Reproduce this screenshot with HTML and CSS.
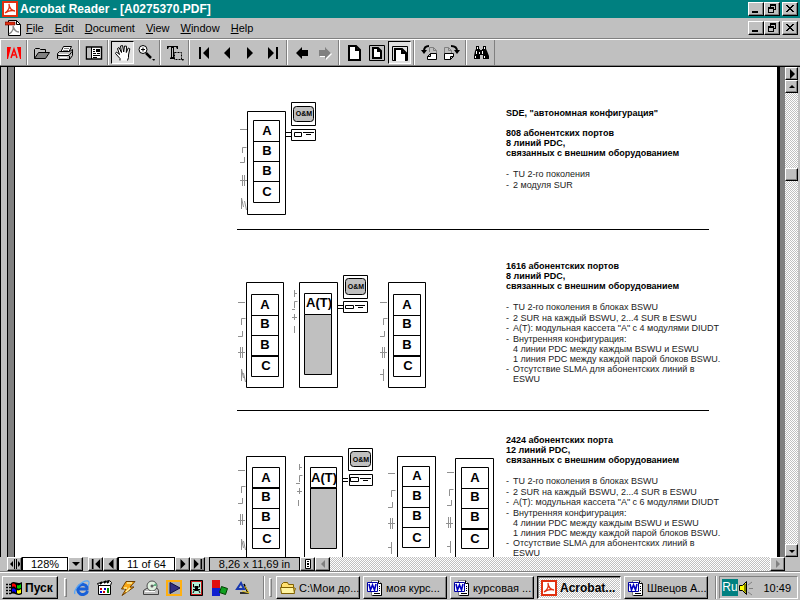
FILE: index.html
```html
<!DOCTYPE html>
<html lang="ru">
  <head>
    <meta charset="UTF-8" />
    <meta name="viewport" content="width=device-width, initial-scale=1.0" />
    <title>Acrobat Reader - [A0275370.PDF]</title>
    <link rel="stylesheet" href="styles.css" />
  </head>
  <body>
    <!-- shared icons -->
    <svg class="sprite" aria-hidden="true">
      <symbol id="i-acrobat" viewBox="0 0 16 16">
        <path fill="#e03010" d="M0 0h16v16H0z" />
        <path fill="#fff" d="M2 2h12v12H2z" />
        <path fill="none" stroke="#e03010" stroke-width="1.3" d="M3 12c3-2 5-5 4-9c0 4 3 7 6 7c-3-1-7 0-10 2" />
      </symbol>
      <symbol id="i-min" viewBox="0 0 12 10"><path d="M2 7h6v2H2z" /></symbol>
      <symbol id="i-restore" viewBox="0 0 12 10">
        <path d="M4 0h6v6H8V5h1V2H5v1H4zM2 3h6v6H2zm1 2v3h4V5z" fill-rule="evenodd" />
      </symbol>
      <symbol id="i-close" viewBox="0 0 12 10">
        <path d="M2 1h2v1h1v1h2V2h1V1h2v1H9v1H8v1H7v1h1v1h1v1h1v1H8V7H7V6H5v1H4v1H2V7h1V6h1V5h1V4H4V3H3V2H2z" />
      </symbol>
      <symbol id="i-first" viewBox="0 0 12 12"><path d="M1 0h2v12H1zM11 0v12L5 6z" /></symbol>
      <symbol id="i-prev" viewBox="0 0 12 12"><path d="M9 0v12L3 6z" /></symbol>
      <symbol id="i-next" viewBox="0 0 12 12"><path d="M3 0v12l6-6z" /></symbol>
      <symbol id="i-last" viewBox="0 0 12 12"><path d="M9 0h2v12H9zM1 0v12l6-6z" /></symbol>
      <symbol id="i-word" viewBox="0 0 16 16">
        <path fill="#fff" stroke="#808080" d="M4.500.5h7l3 3v12h-10z" />
        <path stroke="#000" fill="none" d="M11.500.5v3h3v12h-9M12 6.500h1M12 8.500h1M12 10.500h1M7 13.500h6" />
        <path fill="#fff" stroke="#0000a0" d="M.5 2.500h10v9H.5z" />
        <path fill="none" stroke="#0000c0" stroke-width="1.600" d="M2 4l1.500 6L5.500 5l2 5L9 4" />
      </symbol>
    </svg>

    <header class="titlebar">
      <svg class="icon16"><use href="#i-acrobat" /></svg>
      <h1>Acrobat Reader - [A0275370.PDF]</h1>
      <div class="winButtons">
        <button aria-label="Minimize"><svg><use href="#i-min" /></svg></button>
        <button aria-label="Restore"><svg><use href="#i-restore" /></svg></button>
        <button aria-label="Close"><svg><use href="#i-close" /></svg></button>
      </div>
    </header>

    <nav class="menubar">
      <svg class="icon16" viewBox="0 0 16 16">
        <path fill="#fff" stroke="#000" d="M3.500.5h8l4 4v11h-12z" />
        <path fill="none" stroke="#000" d="M11.500.5v4h4" />
        <path fill="#e03010" stroke="#600" stroke-width=".6" d="M0 2h10v3H0z" />
        <path fill="none" stroke="#888" stroke-width="1.400" d="M4 14c3-2 5-5 4-8c1 4 3 6 6 6" />
      </svg>
      <a href="#"><u>F</u>ile</a>
      <a href="#"><u>E</u>dit</a>
      <a href="#"><u>D</u>ocument</a>
      <a href="#"><u>V</u>iew</a>
      <a href="#"><u>W</u>indow</a>
      <a href="#"><u>H</u>elp</a>
      <div class="winButtons">
        <button aria-label="Minimize document"><svg><use href="#i-min" /></svg></button>
        <button aria-label="Restore document"><svg><use href="#i-restore" /></svg></button>
        <button aria-label="Close document"><svg><use href="#i-close" /></svg></button>
      </div>
    </nav>

    <div class="toolbar">
      <div class="group">
        <button aria-label="Adobe">
          <svg viewBox="0 0 18 18">
            <path fill="#f00" d="M2 3h4L3 15H2zM12 3h4v12h-1z" />
            <path fill="none" stroke="#f00" stroke-width="1.500" d="M6 14L9 5l3 9M7 11h3" />
          </svg>
        </button>
      </div>
      <div class="group">
        <button aria-label="Open">
          <svg viewBox="0 0 18 18">
            <path fill="#c0c0c0" stroke="#000" d="M1.500 14.500v-9l1-1h4l1 1h5v3" />
            <path fill="#808080" stroke="#000" d="M1.500 14.500l4-6h11l-4 6z" />
          </svg>
        </button>
        <button aria-label="Print">
          <svg viewBox="0 0 18 18">
            <path fill="#fff" stroke="#000" d="M4.500 8.500l3-6h8l-3 6z" />
            <path stroke="#808080" d="M8 4.500h5M7 6.500h5" />
            <path fill="#c0c0c0" stroke="#000" d="M1.500 9.500l2-2h10l3-2v6l-3 4h-11l-1-1z" />
            <path fill="none" stroke="#000" d="M2 11.500h11l3-4M13.500 12v3" />
            <path stroke="#fff" d="M3 10.500h9M4 13.500h7" />
          </svg>
        </button>
      </div>
      <div class="group">
        <button aria-label="Navigation pane">
          <svg viewBox="0 0 18 18">
            <path fill="#fff" stroke="#000" stroke-width="1.500" d="M1.500 3h15v12h-15z" />
            <path fill="#c0c0c0" d="M2 4h4v10H2z" />
            <path stroke="#000" d="M6.500 3v12M8 5.500h2M8 7.500h2M11 5.500h4M11 6.500h4M11 7.500h4M8 9.500h3M12 9.500h3M8 11.500h7M8 13.500h4" />
          </svg>
        </button>
      </div>
      <div class="group">
        <button class="pressed" aria-label="Hand tool" aria-pressed="true">
          <svg viewBox="0 0 18 18">
            <path fill="#fff" stroke="#000" d="M6 16.500v-2L1.500 9.500l1-1.500 3 2.500L3.500 4.500 5 3.500l2.500 5-1-6.500 2-.5 1.200 6.500.8-6 2 .2-.2 6.300 2-4.500 1.500.8L14.500 11v2.500l-1 3" />
          </svg>
        </button>
        <button aria-label="Zoom in">
          <svg viewBox="0 0 18 18">
            <circle cx="6" cy="5.500" r="4" fill="#fff" stroke="#000" />
            <path stroke="#000" d="M4 5.500h4M6 3.500v4" />
            <path stroke="#000" stroke-width="2.500" d="M9 9l5 5" />
            <path d="M15 15h3l-1 2z" />
          </svg>
        </button>
      </div>
      <div class="group">
        <button aria-label="Select text">
          <svg viewBox="0 0 18 18">
            <path d="M1 2h11v3h-1l-1-2H8v10l1 1v1H4v-1l1-1V3H3L2 5H1z" />
            <path fill="#c0c0c0" d="M6 4h1v9H6z" />
            <path fill="none" stroke="#000" stroke-dasharray="2 1" d="M8.500 8.500h7v7h-7z" />
            <path d="M15 15h3l-1 2z" />
          </svg>
        </button>
      </div>
      <div class="group">
        <button aria-label="First page"><svg class="nav"><use href="#i-first" /></svg></button>
        <button aria-label="Previous page"><svg class="nav"><use href="#i-prev" /></svg></button>
        <button aria-label="Next page"><svg class="nav"><use href="#i-next" /></svg></button>
        <button aria-label="Last page"><svg class="nav"><use href="#i-last" /></svg></button>
      </div>
      <div class="group">
        <button aria-label="Go back"><svg viewBox="0 0 18 18"><path d="M3 9l6-6v3h6v6H9v3z" /></svg></button>
        <button aria-label="Go forward">
          <svg viewBox="0 0 18 18">
            <path fill="#fff" d="M16 10l-6-6v3H4v6h6v3z" />
            <path fill="#808080" d="M15 9L9 3v3H3v6h6v3z" />
          </svg>
        </button>
      </div>
      <div class="group">
        <button aria-label="Actual size">
          <svg viewBox="0 0 18 18"><path fill="#fff" stroke="#000" stroke-width="2" d="M4 2h7l4 4v10H4zM11 2v4h4" /></svg>
        </button>
        <button aria-label="Fit in window">
          <svg viewBox="0 0 18 18">
            <path fill="none" stroke="#000" d="M1.500 1.500h15v15h-15z" />
            <path fill="#fff" stroke="#000" stroke-width="2" d="M5 4h5l3 3v7H5zM10 4v3h3" />
          </svg>
        </button>
        <button class="pressed" aria-label="Fit width" aria-pressed="true">
          <svg viewBox="0 0 18 18">
            <path fill="none" stroke="#000" d="M1.500 16.500v-14h15v14z" />
            <path fill="#fff" stroke="#000" stroke-width="2" d="M4 17V5h7l4 4v8M11 5v4h4" />
          </svg>
        </button>
      </div>
      <div class="group">
        <button aria-label="Rotate left">
          <svg viewBox="0 0 18 18">
            <path fill="none" stroke="#808080" d="M9.500 8V3.500h4l3 3V9M13.500 3.500v3h3" />
            <path fill="#fff" stroke="#000" d="M7.500 12.500l3-3h6v6h-9zM7.500 12.500h3v-3" />
            <path fill="none" stroke="#000" stroke-width="2" d="M9 2C6 2 4 3 4 7" />
            <path d="M1 6h6l-3 4z" />
          </svg>
        </button>
        <button aria-label="Rotate right">
          <svg viewBox="0 0 18 18">
            <path fill="none" stroke="#808080" d="M1.500 9V3.500h4l3 3V9M5.500 3.500v3h3" />
            <path fill="#fff" stroke="#000" d="M1.500 9.500h9v3l-3 3h-6zM10.500 12.500h-3v3" />
            <path fill="none" stroke="#000" stroke-width="2" d="M8 2c4 0 6 1 6 5" />
            <path d="M11 6h6l-3 4z" />
          </svg>
        </button>
      </div>
      <div class="group">
        <button aria-label="Find">
          <svg viewBox="0 0 18 18">
            <path d="M4 2h3v3h1v1h2V5h1V2h3v3l1 2 2 5v3h-6v-4H8v4H2v-3l1-5 1-2z" />
            <path stroke="#fff" d="M5.500 3v2M12.500 3v2M4.500 7v3M10.500 7v3M3.500 12v2M12.500 12v2M7.500 8v2" />
          </svg>
        </button>
      </div>
    </div>

    <main class="viewer">
      <div class="splitter"></div>
      <article class="page">
        <section>
          <svg class="diagram" viewBox="237 67 269 162" height="162">
            <g class="marks">
              <path d="M240 129.500h7M242.500 153v-5.500h4M240 162.500h4.500V157M240 180.500h7M242.500 175v11M244.500 175v11M241.500 209v-11l2 9M244.500 201l2 9" />
            </g>
            <g class="box">
              <path d="M247.500 111.500h38v103h-38zM253.500 120.500h26v82h-26zM253.500 141.500h26M253.500 161.500h26M253.500 181.500h26" />
              <path d="M291.500 102.500h24v23h-24zM291.500 129.500h24v11h-24zM294.500 132.500h7v4h-7zM303 132.500h11M306 134.500h5M286 132.500h5M286 136.500h5" />
              <rect class="screen" x="293.500" y="106.500" width="20" height="15" rx="3" />
            </g>
            <text x="267" y="135">A</text>
            <text x="267" y="155">B</text>
            <text x="267" y="175">B</text>
            <text x="267" y="196">C</text>
            <text class="om" x="304" y="116">O&amp;M</text>
          </svg>
          <div class="notes">
            <h2>SDE, "автономная конфигурация"</h2>
            <h3>808 абонентских портов<br />8 линий PDC,<br />связанных с внешним оборудованием</h3>
            <ul>
              <li><span>-</span><span>TU 2-го поколения</span></li>
              <li><span>-</span><span>2 модуля SUR</span></li>
            </ul>
          </div>
        </section>

        <section class="second">
          <svg class="diagram" viewBox="237 230 269 180" height="180">
            <g class="marks">
              <path d="M238 302.500h7M241.500 325v-6.500h4M238 336.500h4.500V331M238 352.500h7M240.500 347v11M242.500 347v11M241.500 381v-12l2 9M243.500 373l2 9" />
              <path d="M294.500 290v7M294 293.500h3M294.500 308v-6.500h3M292 309.500h3M292 317.500h5M294.500 314v6M294.500 326v7" />
              <path d="M380 302.500h7M383.500 325v-6.500h4M380 336.500h4.500V331M380 352.500h7M382.500 347v11M384.500 347v11M380 374.500h4M383.500 369v12" />
            </g>
            <g class="box">
              <path d="M246.500 282.500h37v105h-37zM251.500 294.500h27v82h-27zM251.500 315.500h27M251.500 335.500h27M251.500 355.500h27M251.500 356.500h27" />
              <path d="M299.500 282.500h38v105h-38zM304.500 293.500h27v21h-27z" />
              <path class="fill" d="M304.500 314.500h27v60h-27z" />
              <path d="M388.500 282.500h37v105h-37zM393.500 294.500h27v82h-27zM393.500 315.500h27M393.500 335.500h27M393.500 355.500h27M393.500 356.500h27" />
              <path d="M343.500 275.500h24v23h-24zM343.500 301.500h24v11h-24zM345.500 305.500h8v3h-8zM355 305.500h10M358 307.500h5M338 305.500h5M338 308.500h5" />
              <rect class="screen" x="345.500" y="278.500" width="20" height="16" rx="3" />
            </g>
            <text x="265" y="309">A</text>
            <text x="265" y="328">B</text>
            <text x="265" y="349">B</text>
            <text x="266" y="370">C</text>
            <text x="319" y="307">A(T)</text>
            <text x="407" y="309">A</text>
            <text x="407" y="328">B</text>
            <text x="407" y="349">B</text>
            <text x="408" y="370">C</text>
            <text class="om" x="356" y="289">O&amp;M</text>
          </svg>
          <div class="notes">
            <h3>1616 абонентских портов<br />8 линий PDC,<br />связанных с внешним оборудованием</h3>
            <ul>
              <li><span>-</span><span>TU 2-го поколения в блоках BSWU</span></li>
              <li><span>-</span><span>2 SUR на каждый BSWU, 2...4 SUR в ESWU</span></li>
              <li><span>-</span><span>A(T): модульная кассета "A" с 4 модулями DIUDT</span></li>
              <li><span>-</span><span>Внутренняя конфигурация:<br />4 линии PDC между каждым BSWU и ESWU<br />1 линия PDC между каждой парой блоков BSWU.</span></li>
              <li><span>-</span><span>Отсутствие SLMA для абонентских линий в<br />ESWU</span></li>
            </ul>
          </div>
        </section>

        <section class="third">
          <svg class="diagram" viewBox="237 411 269 180" height="180">
            <g class="marks">
              <path d="M238 470.500h7M241.500 493v-6.500h4M238 503.500h4.500V498M238 520.500h7M240.500 514v11M242.500 514v11M241.500 550v-11l2 9M243.500 541l2 9" />
              <path d="M299.500 464v6M299 467.500h3M299.500 482v-6.500h3M296 483.500h4M297 491.500h5M299.500 488v6M298.500 500v6" />
              <path d="M388 473.500h7M391.500 497v-6.500h4M388 507.500h4.500V502M388 523.500h7M390.500 518v11M392.500 518v11M388 547.500h4M391.500 542v12" />
              <path d="M447 472.500h7M449.500 496v-6.500h4M447 505.500h4.500V500M446 523.500h7M448.500 517v11M450.500 517v11M447 546.500h4M450.500 541v12" />
            </g>
            <g class="box">
              <path d="M246.500 456.500h39v110h-39zM252.500 467.500h27v81h-27zM252.500 487.500h27M252.500 488.500h27M252.500 508.500h27M252.500 528.500h27" />
              <path d="M304.500 456.500h38v110h-38zM310.500 467.500h26v20h-26z" />
              <path class="fill" d="M310.500 487.500h26v61h-26zM310.500 488.500h26" />
              <path d="M397.500 456.500h38v110h-38zM402.500 466.500h27v81h-27zM402.500 486.500h27M402.500 507.500h27M402.500 527.500h27" />
              <path d="M455.500 458.500h38v110h-38zM461.500 467.500h27v81h-27zM461.500 488.500h27M461.500 508.500h27M461.500 528.500h27M461.500 529.500h27" />
              <path d="M348.500 448.500h24v22h-24zM349.500 474.500h23v11h-23zM350.500 477.500h8v4h-8zM360 478.500h11M363 480.500h5M343 478.500h5M343 481.500h5" />
              <rect class="screen" x="350.500" y="451.500" width="20" height="15" rx="3" />
            </g>
            <text x="266" y="482">A</text>
            <text x="266" y="501">B</text>
            <text x="266" y="521">B</text>
            <text x="267" y="543">C</text>
            <text x="324" y="482">A(T)</text>
            <text x="417" y="480">A</text>
            <text x="417" y="500">B</text>
            <text x="417" y="520">B</text>
            <text x="417" y="542">C</text>
            <text x="475" y="482">A</text>
            <text x="475" y="501">B</text>
            <text x="475" y="521">B</text>
            <text x="475" y="543">C</text>
            <text class="om" x="361" y="462">O&amp;M</text>
          </svg>
          <div class="notes">
            <h3>2424 абонентских порта<br />12 линий PDC,<br />связанных с внешним оборудованием</h3>
            <ul>
              <li><span>-</span><span>TU 2-го поколения в блоках BSWU</span></li>
              <li><span>-</span><span>2 SUR на каждый BSWU, 2...4 SUR в ESWU</span></li>
              <li><span>-</span><span>A(T): модульная кассета "A" с 6 модулями DIUDT</span></li>
              <li><span>-</span><span>Внутренняя конфигурация:<br />4 линии PDC между каждым BSWU и ESWU<br />1 линия PDC между каждой парой блоков BSWU.</span></li>
              <li><span>-</span><span>Отсутствие SLMA для абонентских линий в<br />ESWU</span></li>
            </ul>
          </div>
        </section>
      </article>
      <div class="vscroll">
        <button class="raised" aria-label="Menu"><svg viewBox="0 0 10 10"><path d="M3 0v10l5-5z" /></svg></button>
        <button class="raised" aria-label="Scroll up"><svg viewBox="0 0 10 10"><path d="M5 3l3 3H2z" /></svg></button>
        <div class="track"><div class="thumb raised"></div></div>
        <button class="raised" aria-label="Scroll down"><svg viewBox="0 0 10 10"><path d="M2 4h6L5 7z" /></svg></button>
      </div>
    </main>

    <div class="statusbar">
      <button class="raised" aria-label="Show pane"><svg viewBox="0 0 10 10"><path d="M4 0h1v10H4zM6 0h1v10H6zM3 2v6L0 5zM8 2v6l3-3z" /></svg></button>
      <select class="zoom" aria-label="Magnification"><option>128%</option></select>
      <button class="raised" aria-label="Choose magnification"><svg viewBox="0 0 10 10"><path d="M1 3h8L5 7z" /></svg></button>
      <button class="raised gapLeft" aria-label="First"><svg><use href="#i-first" /></svg></button>
      <button class="raised" aria-label="Previous"><svg><use href="#i-prev" /></svg></button>
      <input class="pageNo" type="text" value="11 of 64" aria-label="Page" />
      <button class="raised" aria-label="Next"><svg><use href="#i-next" /></svg></button>
      <button class="raised" aria-label="Last"><svg><use href="#i-last" /></svg></button>
      <div class="pageSize">8,26 x 11,69 in</div>
      <button class="raised" aria-label="Page layout"><svg viewBox="0 0 10 10"><path fill="#fff" stroke="#000" d="M2.500.5h5v9h-5z" /><path d="M4 2h2v1H4zM4 4h2v2H4zM4 7h2v1H4z" /></svg></button>
      <button class="raised" aria-label="Scroll left" disabled><svg viewBox="0 0 10 10"><path d="M7 1v8L3 5z" /></svg></button>
      <div class="track"></div>
      <button class="raised" aria-label="Scroll right" disabled><svg viewBox="0 0 10 10"><path d="M3 1v8l4-4z" /></svg></button>
    </div>

    <footer class="taskbar">
      <button class="task start">
        <svg class="icon16" viewBox="0 0 16 16">
          <path stroke="#000" stroke-width="1.500" stroke-dasharray="2 1" d="M0 4.500h5M0 7.500h5M0 10.500h5M0 13.500h5" />
          <path d="M5 3c4-3 6 2 11-1v12c-5 3-7-2-11 0z" />
          <path fill="#f00" d="M6 4c2-1 3 0 4 1v3C9 7 8 6 6 7z" />
          <path fill="#0c0" d="M11 5c1 1 3 0 4-1v4c-2 1-3 1-4 0z" />
          <path fill="#00f" d="M6 9c2-1 3 0 4 1v3c-1-1-2-2-4-1z" />
          <path fill="#ff0" d="M11 10c1 1 3 0 4-1v4c-2 1-3 1-4 0z" />
        </svg>
        Пуск
      </button>
      <div class="grip"></div>
      <div class="quick">
        <a href="#" aria-label="Internet Explorer">
          <svg class="icon16" viewBox="0 0 16 16">
            <path fill="none" stroke="#1860d8" stroke-width="3" d="M13.500 11A5 5 0 1 1 13 7v2H5" />
            <path fill="none" stroke="#58a8f8" stroke-width="1.300" d="M1 14C-1 10 8 0 14 1c2 1 1 3 0 5" />
          </svg>
        </a>
        <a href="#" aria-label="Player">
          <svg class="icon16" viewBox="0 0 16 16">
            <path fill="#fff" stroke="#000" d="M1.500 5.500h12v9h-12zM1.500 5.500l-1-2 12-3 2 2-1 3" />
            <path stroke="#000" stroke-width="2" d="M3 4l2-2M7 3l2-2M10 3l2-2" />
            <path fill="#c00" d="M3 8h2v2H3zM6 11h2v2H6z" /><path fill="#00c" d="M7 8h2v2H7zM3 11h2v2H3z" /><path fill="#080" d="M10 8h2v5h-2z" />
          </svg>
        </a>
        <a href="#" aria-label="Winamp">
          <svg class="icon16" viewBox="0 0 16 16"><path fill="#f8a818" stroke="#704000" d="M6 1.500h9L10 7h4L2 15.500 6 9H1.500z" /><path stroke="#fff0a0" stroke-width="1.500" d="M7 3h5M4 8h3M6 12l4-4" /></svg>
        </a>
        <a href="#" aria-label="CD player">
          <svg class="icon16" viewBox="0 0 16 16">
            <path fill="#c0c0c0" stroke="#404040" d="M.5 10.500l3-2h11l1 2v4H.5z" />
            <circle cx="9" cy="6" r="5" fill="#e0f0e0" stroke="#505050" /><path fill="#60b080" d="M9 6l4-3 1 3z" /><circle cx="9" cy="6" r="1.500" fill="#606060" />
            <path fill="#fff" d="M2 11h10v1H2z" />
          </svg>
        </a>
        <a href="#" aria-label="Media player">
          <svg class="icon16" viewBox="0 0 16 16"><path fill="#ffb010" d="M0 0h16v16H0z" /><path fill="#b0b0b0" d="M2 2h12v12H2z" /><path fill="#303080" stroke="#101040" d="M4 2.500v11L14 8z" /></svg>
        </a>
        <a href="#" aria-label="The Bat">
          <svg class="icon16" viewBox="0 0 16 16"><path fill="#c01818" stroke="#000" d="M1.500.5h12v15h-12z" /><path fill="#b0f0d8" d="M3 2h9v12H3z" /><path fill="none" stroke="#000" d="M4.500 4v3h6V4M4 13l2-4h3l2 4M4 9.500h7" /><path d="M6 6h3v5H6z" /></svg>
        </a>
        <a href="#" aria-label="Blocks">
          <svg class="icon16" viewBox="0 0 16 16"><path fill="#e01010" d="M0 0h8v8H0z" /><path fill="#1020d0" d="M0 8h8v8H0z" /><path fill="#10a020" stroke="#004000" d="M9.500 6.500l6 2-2 6-6-2z" /></svg>
        </a>
        <a href="#" aria-label="Drawing">
          <svg class="icon16" viewBox="0 0 16 16"><path fill="none" stroke="#1838b0" stroke-width="2" d="M2 9h7L6 3z" /><path fill="none" stroke="#000" stroke-width="1.500" d="M5 13h8L9 4" /><path fill="none" stroke="#e0c020" d="M7 11l7 2-4-7" /></svg>
        </a>
      </div>
      <div class="divider"></div>
      <div class="grip"></div>
      <div class="tasks">
        <button class="task">
          <svg class="icon16" viewBox="0 0 16 16"><path fill="#ffe070" stroke="#806000" d="M1.500 13.500v-9l2-2h4l1 2h5v3l2 1-2 5z" /><path fill="#fff4a0" stroke="#806000" d="M1.500 13.500l-1-6h13l1 6z" /></svg>
          <span>C:\Мои до...</span>
        </button>
        <button class="task"><svg class="icon16"><use href="#i-word" /></svg><span>моя курс...</span></button>
        <button class="task"><svg class="icon16"><use href="#i-word" /></svg><span>курсовая ...</span></button>
        <button class="task active" aria-pressed="true"><svg class="icon16"><use href="#i-acrobat" /></svg><span>Acrobat...</span></button>
        <button class="task"><svg class="icon16"><use href="#i-word" /></svg><span>Швецов А...</span></button>
      </div>
      <div class="divider last"></div>
      <div class="tray">
        <span class="lang">Ru</span>
        <svg class="icon16" viewBox="0 0 16 16">
          <path fill="#ff0" stroke="#000" d="M1.500 5.500h3l4-4v13l-4-4h-3z" />
          <path fill="#808000" d="M6 4h2v9L6 11z" />
          <path stroke="#808080" d="M11 8.500h4M10 5l4-3M10 12l4 3" />
        </svg>
        <time>10:49</time>
      </div>
    </footer>
  </body>
</html>
```
FILE: styles.css
```css
* {
  box-sizing: border-box;
}

body {
  margin: 0;
  height: 100vh;
  display: flex;
  flex-direction: column;
  overflow: hidden;
  background-color: #c0c0c0;
  color: #000;
  font-family: "Liberation Sans", Arial, sans-serif;
  font-size: 11px;
}

h1,
h2,
h3,
ul {
  margin: 0;
  padding: 0;
}

button,
input,
select {
  margin: 0;
  padding: 0;
  border: none;
  border-radius: 0;
  background-color: #c0c0c0;
  color: #000;
  font: inherit;
}

a {
  color: #000;
  text-decoration: none;
}

svg {
  display: block;
  flex: none;
}

.sprite {
  position: absolute;
  width: 0;
  height: 0;
}

.icon16 {
  width: 16px;
  height: 16px;
}

.raised {
  border: 1px solid;
  border-color: #fff #000 #000 #fff;
  box-shadow: inset -1px -1px #808080;
}

/* Title and menu */
.titlebar {
  display: flex;
  align-items: center;
  gap: 2px;
  height: 18px;
  padding: 0 2px;
  background-color: #008080;
  color: #fff;
}

.titlebar h1 {
  font-size: 12px;
  line-height: 18px;
}

.winButtons {
  display: flex;
  margin-left: auto;
}

.winButtons button {
  display: flex;
  align-items: center;
  justify-content: center;
  width: 16px;
  height: 14px;
  border: 1px solid;
  border-color: #fff #000 #000 #fff;
  box-shadow: inset -1px -1px #808080;
}

.winButtons button:last-child {
  margin-left: 2px;
}

.winButtons svg {
  width: 12px;
  height: 10px;
}

.menubar {
  display: flex;
  align-items: center;
  gap: 11px;
  height: 21px;
  padding: 0 2px 0 5px;
  border-bottom: 1px solid #808080;
}

.menubar .icon16 {
  margin-right: -6px;
}

/* Toolbar */
.toolbar {
  display: flex;
  height: 28px;
  border-top: 1px solid #fff;
  border-bottom: 1px solid #000;
  box-shadow: inset 0 -1px #808080;
  padding-bottom: 1px;
}

.group {
  display: flex;
  align-items: center;
  padding: 0 2px;
  border-left: 1px solid #fff;
  border-right: 1px solid #808080;
}

.group:first-child {
  padding: 0 1px;
}

.group button {
  display: flex;
  align-items: center;
  justify-content: center;
  width: 23px;
  height: 23px;
}

.group svg {
  width: 18px;
  height: 18px;
}

.group .nav {
  width: 12px;
  height: 12px;
}

.group .pressed {
  border: 1px solid;
  border-color: #000 #fff #fff #000;
  background-color: #e0e0e0;
}

/* Document */
.viewer {
  display: flex;
  flex: 1;
  min-height: 0;
  background-color: #808080;
}

.splitter {
  width: 8px;
  border: solid #000;
  border-width: 0 1px;
  background-color: #c0c0c0;
}

.page {
  flex: 1;
  margin: 0 5px 0 6px;
  padding-left: 222px;
  overflow: hidden;
  border-left: 1px solid #000;
  border-right: 3px solid #000;
  background-color: #fff;
}

.page section {
  display: grid;
  grid-template-columns: 269px 1fr;
  margin-right: 68px;
  border-bottom: 1px solid #000;
}

.diagram {
  width: 269px;
}

.diagram text {
  font-size: 13px;
  font-weight: bold;
  text-anchor: middle;
}

.diagram .om {
  font-size: 7px;
}

.marks {
  fill: none;
  stroke: #909090;
}

.box {
  fill: none;
  stroke: #000;
}

.fill,
.screen {
  fill: #c0c0c0;
}

.notes {
  padding-top: 41px;
  font-size: 9px;
  line-height: 10px;
  white-space: nowrap;
}

.second .notes {
  padding-top: 31px;
}

.third .notes {
  padding-top: 24px;
}

.notes h2,
.notes h3 {
  margin-bottom: 10px;
  font-size: 9px;
}

.notes ul {
  color: #222;
  list-style: none;
}

.notes h3 + ul {
  margin-top: 11px;
}

.notes li {
  display: grid;
  grid-template-columns: 7px 1fr;
}

.notes li:nth-child(even) {
  margin-top: 1px;
}

/* Scroll bars */
.track {
  flex: 1;
  background: repeating-conic-gradient(#fff 0 25%, #c0c0c0 0 50%) 0 0 / 2px 2px;
}

.vscroll {
  display: flex;
  flex-direction: column;
  width: 15px;
  padding-right: 2px;
  background-color: #c0c0c0;
}

.vscroll button,
.thumb {
  height: 13px;
}

.vscroll svg,
.statusbar svg {
  width: 10px;
  height: 10px;
}

.vscroll .track {
  padding-top: 75px;
}

.thumb {
  background-color: #c0c0c0;
}

.statusbar {
  display: flex;
  height: 14px;
  padding: 0 15px 0 7px;
}

.statusbar button {
  display: flex;
  align-items: center;
  justify-content: center;
  width: 15px;
}

.vscroll button {
  display: flex;
  align-items: center;
  justify-content: center;
}

.statusbar button:disabled svg {
  fill: #808080;
}

.statusbar .gapLeft {
  margin-left: 5px;
}

.zoom,
.pageNo,
.pageSize {
  height: 14px;
  border: 1px solid #000;
  line-height: 12px;
  text-align: center;
}

.zoom {
  appearance: none;
  width: 46px;
  background-color: #fff;
}

.pageNo {
  width: 57px;
  background-color: #fff;
}

.pageSize {
  width: 91px;
  margin-left: 4px;
}

/* Taskbar */
.taskbar {
  display: flex;
  align-items: center;
  height: 29px;
  padding: 3px 2px 0;
  border-top: 1px solid #808080;
  box-shadow: inset 0 1px #fff;
}

.task {
  display: flex;
  align-items: center;
  gap: 3px;
  height: 23px;
  padding: 0 3px;
  border: 1px solid;
  border-color: #fff #000 #000 #fff;
  box-shadow: inset -1px -1px #808080;
  white-space: nowrap;
}

.start {
  width: 56px;
  font-size: 12px;
  font-weight: bold;
}

.grip {
  width: 3px;
  height: 19px;
  margin-left: 6px;
  border: 1px solid;
  border-color: #fff #808080 #808080 #fff;
}

.quick {
  display: flex;
  gap: 7px;
  margin: 0 12px 0 7px;
}

.divider {
  width: 2px;
  height: 23px;
  border-left: 1px solid #808080;
  border-right: 1px solid #fff;
}

.divider.last {
  margin-left: auto;
}

.divider + .grip {
  margin-left: 4px;
}

.tasks {
  display: flex;
  flex: 0 1 432px;
  gap: 3px;
  min-width: 0;
  margin-left: 4px;
}

.tasks .task {
  flex: 1;
  min-width: 0;
}

.tasks .active {
  border-color: #000 #fff #fff #000;
  box-shadow: inset 1px 1px #808080;
  background: repeating-conic-gradient(#fff 0 25%, #c0c0c0 0 50%) 0 0 / 2px 2px;
  font-size: 12px;
  font-weight: bold;
}

.tray {
  display: flex;
  align-items: center;
  width: 79px;
  height: 23px;
  margin-left: 2px;
  padding: 0 6px 0 2px;
  border: 1px solid;
  border-color: #808080 #fff #fff #808080;
}

.lang {
  width: 16px;
  background-color: #008080;
  color: #fff;
  font-size: 12px;
  line-height: 17px;
  text-align: center;
}

.tray time {
  margin-left: auto;
}
```
